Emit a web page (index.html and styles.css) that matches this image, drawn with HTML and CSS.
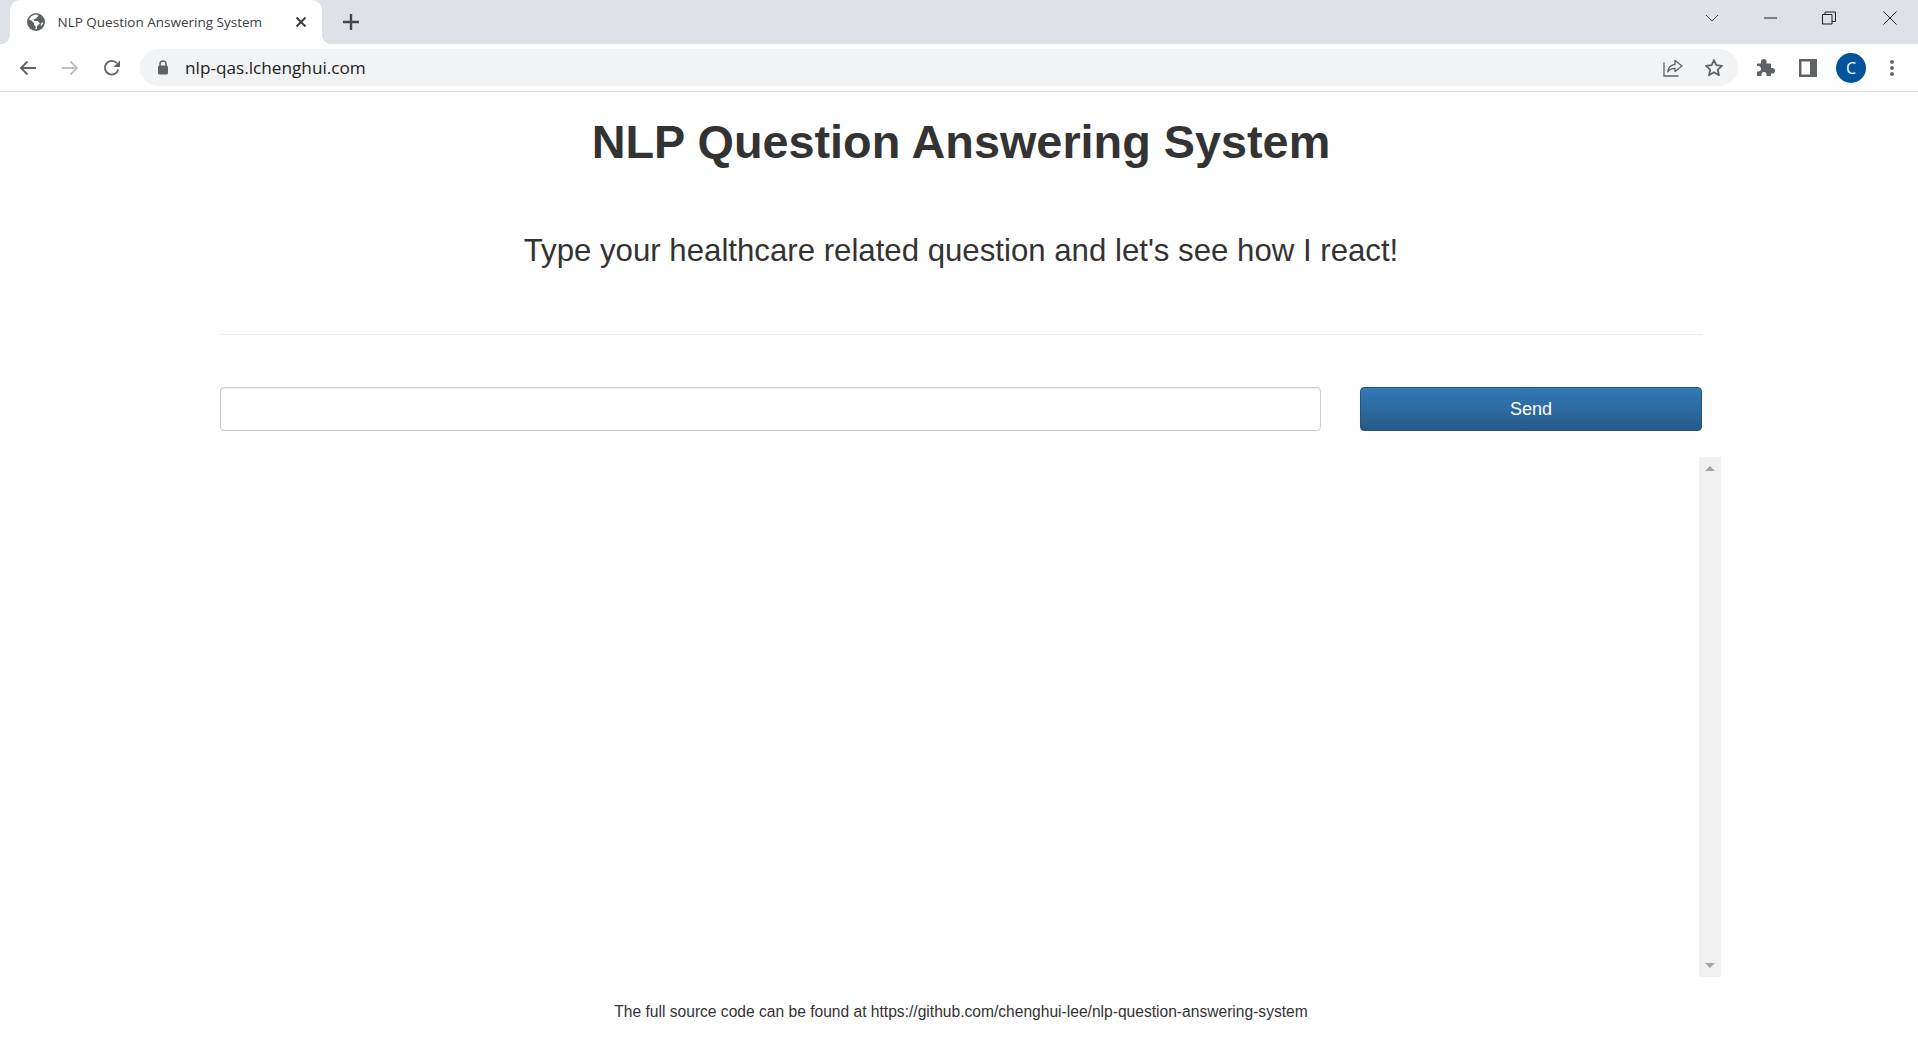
FILE: index.html
```html
<!DOCTYPE html>
<html lang="en">
<head>
<meta charset="utf-8">
<title>NLP Question Answering System</title>
<link rel="stylesheet" href="styles.css">
</head>
<body>
<header class="chrome">
  <div class="tabstrip">
    <div class="tab">
      <svg class="favicon" width="18" height="18" viewBox="0 0 18 18"><circle cx="9" cy="9" r="9" fill="#5f6368"/><path d="M8 1.500 4.500 3 2 6.500l2.500 1L7 10v2l1.500 1v3.300l1.500-.3V13l3-2.500L10.500 8H7.500L6.500 6.500 9 5.500 10.500 3.500 12 3 9.500 1.500zM14 13l1.500-1.500.8-2.500-1.800 1-1 1.500z" fill="#fff"/></svg>
      <span class="tab-title">NLP Question Answering System</span>
      <svg class="tab-close" width="12" height="12" viewBox="0 0 12 12"><path d="M1.500 1.500l9 9M10.500 1.500l-9 9" stroke="#3c4043" stroke-width="2" fill="none"/></svg>
    </div>
    <svg class="newtab" width="16" height="16" viewBox="0 0 16 16"><path d="M8 0v16M0 8h16" stroke="#45494d" stroke-width="2.400" fill="none"/></svg>
    <div class="window-controls">
      <svg class="win-btn win-chev" width="14" height="8" viewBox="0 0 14 8"><path d="M1 1l6 6 6-6" stroke="#3c4043" stroke-width="1" fill="none"/></svg>
      <svg class="win-btn win-min" width="14" height="2" viewBox="0 0 14 2"><path d="M0 1h13" stroke="#202124" stroke-width="1" fill="none"/></svg>
      <svg class="win-btn win-restore" width="14" height="14" viewBox="0 0 14 14"><path d="M.5 3.500h9.500v9.500H.5zM3 3.500V1h10.500v9.500H10" stroke="#202124" stroke-width="1" fill="none"/></svg>
      <svg class="win-btn" width="14" height="14" viewBox="0 0 14 14"><path d="M.5.5l13 13M13.500.5l-13 13" stroke="#202124" stroke-width="1" fill="none"/></svg>
    </div>
  </div>
  <div class="toolbar">
    <span class="icon-btn"><svg width="18" height="16" viewBox="0 0 18 16"><path d="M17 8H2M8.500 1.500 2 8l6.500 6.500" stroke="#5f6368" stroke-width="1.800" fill="none"/></svg></span>
    <span class="icon-btn"><svg width="18" height="16" viewBox="0 0 18 16"><path d="M1 8h15M9.500 1.500 16 8l-6.500 6.500" stroke="#bdc1c6" stroke-width="1.800" fill="none"/></svg></span>
    <span class="icon-btn"><svg width="18" height="18" viewBox="0 0 18 18"><path d="M15.300 10.500A6.800 6.800 0 1 1 13.800 4.200" stroke="#5f6368" stroke-width="1.800" fill="none"/><path d="M17 1.500V8h-6.500z" fill="#5f6368"/></svg></span>
    <div class="omnibox">
      <svg class="lock" width="12" height="15" viewBox="0 0 12 15"><path d="M3 6V4a3 3 0 0 1 6 0v2" stroke="#5f6368" stroke-width="1.500" fill="none"/><rect x="1" y="5.500" width="10" height="9" rx="1.500" fill="#5f6368"/></svg>
      <span class="url">nlp-qas.lchenghui.com</span>
      <span class="omni-actions">
        <svg width="20" height="18" viewBox="0 0 20 18"><path d="M1 3.500V17h14.500" stroke="#5f6368" stroke-width="1.300" fill="none"/><path d="M12 1.500 19 7l-7 5.500V9.300c-3.500 0-5.500 1-7.300 3.700.5-4 2.800-7 7.300-7.600z" stroke="#5f6368" stroke-width="1.300" fill="none" stroke-linejoin="round"/></svg>
        <svg width="20" height="19" viewBox="0 0 20 19"><path d="M10 2l2.300 5.200 5.700.6-4.300 3.800 1.300 5.600L10 14.300l-5 2.900 1.300-5.600L2 7.800l5.700-.6z" stroke="#5f6368" stroke-width="1.800" fill="none" stroke-linejoin="round"/></svg>
      </span>
    </div>
    <span class="icon-btn icon-puzzle"><svg width="19" height="19" viewBox="0 0 19 19"><path d="M1 5.500h4V3.800a2.800 2.800 0 0 1 5.600 0v1.700h4.400v4.400h1.200a2.800 2.800 0 0 1 0 5.600H15V18H10.500v-1.500a2.500 2.500 0 0 0-5 0V18H1v-4.500h1.200a2.700 2.700 0 0 0 0-5.400H1z" fill="#5f6368"/></svg></span>
    <span class="icon-btn"><svg width="18" height="18" viewBox="0 0 18 18"><path d="M0 0h18v18H0z" fill="#5f6368"/><path d="M2.500 2.500h8.500v13H2.500z" fill="#fff"/></svg></span>
    <span class="icon-btn icon-avatar"><span class="avatar">C</span></span>
    <span class="icon-btn"><svg width="4" height="16" viewBox="0 0 4 16"><circle cx="2" cy="2" r="1.900" fill="#5f6368"/><circle cx="2" cy="8" r="1.900" fill="#5f6368"/><circle cx="2" cy="14" r="1.900" fill="#5f6368"/></svg></span>
  </div>
</header>
<main class="page">
  <h1 class="title">NLP Question Answering System</h1>
  <p class="subtitle">Type your healthcare related question and let's see how I react!</p>
  <hr class="rule">
  <form class="ask">
    <input class="ask-input" type="text" aria-label="Question">
    <button class="ask-send" type="button">Send</button>
  </form>
  <div class="chat">
    <div class="scrollbar">
      <span class="arrow-up"></span>
      <span class="arrow-down"></span>
    </div>
  </div>
  <p class="source">The full source code can be found at https://github.com/chenghui-lee/nlp-question-answering-system</p>
</main>
</body>
</html>
```
FILE: styles.css
```css
* { box-sizing: border-box; }
html, body { margin: 0; height: 100%; background: #fff; overflow: hidden; }
body { font-family: "Liberation Sans", Arial, sans-serif; color: #333; }

.chrome { height: 92px; border-bottom: 1px solid #dadce0; }
.tabstrip { height: 44px; background: #dee1e6; display: flex; align-items: center; padding-left: 10px; }
.tab { position: relative; width: 312px; height: 44px; background: #fff; border-radius: 10px 10px 0 0; display: flex; align-items: center; padding: 0 15px 0 17px; }
.tab::before, .tab::after { content: ""; position: absolute; bottom: 0; width: 10px; height: 10px; }
.tab::before { left: -10px; background: radial-gradient(circle at 0 0, #dee1e6 10px, #fff 10.500px); }
.tab::after { right: -10px; background: radial-gradient(circle at 100% 0, #dee1e6 10px, #fff 10.500px); }
.favicon { flex: none; }
.tab-title { margin-left: 12.500px; font: 13.500px "Open Sans", sans-serif; color: #3c4043; white-space: nowrap; flex: 1; }
.tab-close { flex: none; }
.newtab { margin-left: 21px; flex: none; }
.window-controls { margin-left: auto; display: flex; align-items: center; padding-bottom: 8px; }
.win-btn { flex: none; }
.win-btn:last-child { margin-right: 21px; }
.win-chev { margin-right: 45px; }
.win-min { margin-right: 44px; }
.win-restore { margin-right: 47px; }

.toolbar { height: 47px; background: #fff; display: flex; align-items: center; gap: 8px; padding: 0 9px 0 11px; }
.icon-btn { width: 34px; height: 34px; flex: none; display: flex; align-items: center; justify-content: center; }
.icon-puzzle { padding-right: 1px; }
.icon-avatar { padding-left: 2px; }
.omnibox { flex: 1; height: 37px; margin: 0 3px 0 3px; background: #f1f3f4; border-radius: 19px; display: flex; align-items: center; padding: 0 14px 0 17px; }
.lock { flex: none; }
.url { margin-left: 16px; font: 17.200px "Open Sans", sans-serif; color: #202124; }
.omni-actions { margin-left: auto; display: flex; gap: 21px; align-items: center; }
.avatar { width: 30px; height: 30px; border-radius: 50%; background: #00549c; color: #fff; font: 16px/30px "Open Sans", sans-serif; text-align: center; }

.page { width: 1482px; margin-left: 220px; }
.title { margin: 0; padding-top: 22px; font-size: 46.800px; line-height: 56px; font-weight: 700; text-align: center; color: #333; }
.subtitle { margin: 61px 0 0; font-size: 31.200px; line-height: 40px; text-align: center; color: #333; }
.rule { margin: 63px 0 0; border: 0; border-top: 1px solid #eee; }
.ask { display: flex; justify-content: space-between; margin-top: 52px; }
.ask-input { width: 1101px; height: 44px; border: 1px solid #ccc; border-radius: 4px; background: #fff; box-shadow: inset 0 1px 1px rgba(0,0,0,.075); }
.ask-send { width: 342px; height: 44px; border: 1px solid #245580; border-radius: 4px; color: #fff; font: 18px "Liberation Sans", sans-serif; background: linear-gradient(#337ab7, #265a88); }
.chat { width: 1501px; height: 520px; margin-top: 26px; display: flex; justify-content: flex-end; }
.scrollbar { width: 22px; background: #f0f0f0; display: flex; flex-direction: column; justify-content: space-between; align-items: center; padding: 9px 0; }
.arrow-up { width: 0; height: 0; border: 5px solid transparent; border-top: 0; border-bottom: 5px solid #a3a3a3; }
.arrow-down { width: 0; height: 0; border: 5px solid transparent; border-bottom: 0; border-top: 5px solid #a3a3a3; }
.source { margin: 26px 0 0; font-size: 15.600px; line-height: 18px; text-align: center; color: #333; }
```
